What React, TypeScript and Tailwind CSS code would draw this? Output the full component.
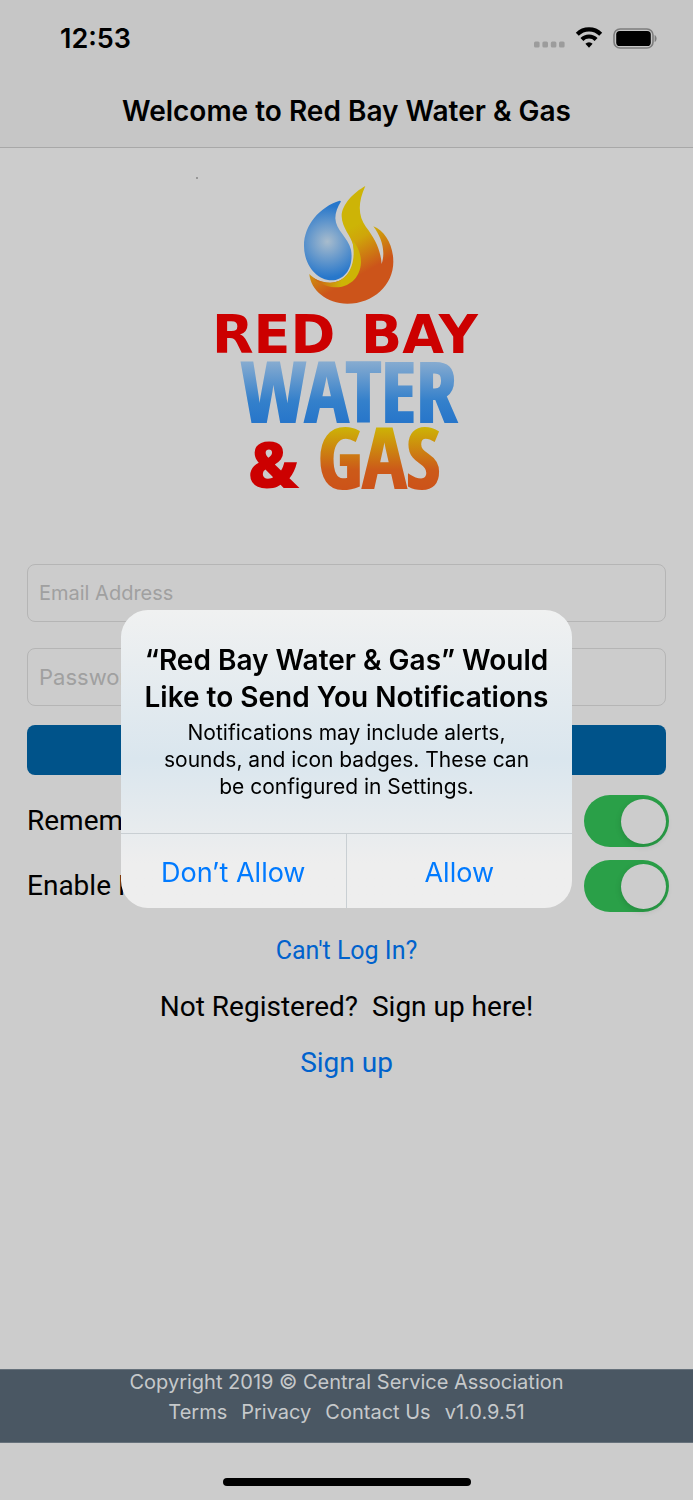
import { useState } from "react";

type ToggleRowProps = {
  id: string;
  label: string;
};

function StatusBar() {
  return (
    <div className="flex items-center justify-between pt-6 pr-9 pl-[60px]">
      <span className="text-[27px] leading-[30px] font-semibold">12:53</span>
      <div className="flex items-center gap-[11px]">
        {/* SIGNAL */}
        <svg width="31" height="20" viewBox="0 0 31 20" fill="#9c9c9c">
          <rect x="0" y="12.6" width="5.6" height="6" rx="1.5" />
          <rect x="8.4" y="12.6" width="5.6" height="6" rx="1.5" />
          <rect x="16.8" y="12.6" width="5.6" height="6" rx="1.5" />
          <rect x="25" y="12.6" width="5.6" height="6" rx="1.5" />
        </svg>
        {/* WIFI */}
        <svg width="26" height="20" viewBox="0 0 26 20" fill="none" stroke="#000" overflow="visible">
          <path d="M1.3 5.2 A16.5 16.5 0 0 1 24.7 5.2" strokeWidth="4.2" />
          <path d="M5.9 10.5 A9.8 9.8 0 0 1 20.1 10.5" strokeWidth="4" />
          <path d="M9.4 14.8 A4.8 4.8 0 0 1 16.6 14.8 L13 18.8 Z" fill="#000" stroke="none" />
        </svg>
        {/* BATTERY */}
        <svg width="44" height="22" viewBox="0 0 44 22">
          <rect x="1" y="1" width="39" height="19" rx="6" fill="none" stroke="#7d7d7d" strokeWidth="1.6" />
          <rect x="3.2" y="3" width="34.6" height="15" rx="3.6" fill="#000" />
          <path d="M41.6 7 C44.2 8 44.2 13 41.6 14 Z" fill="#7d7d7d" />
        </svg>
      </div>
    </div>
  );
}

function Logo() {
  return (
    <svg width="309" height="330" viewBox="192 170 309 330" role="img" aria-label="Red Bay Water & Gas">
      <defs>
        <radialGradient id="drop" gradientUnits="userSpaceOnUse" cx="112" cy="200" r="108">
          <stop offset="0" stopColor="#a8bccd" />
          <stop offset="1" stopColor="#2777cb" />
        </radialGradient>
        <linearGradient id="flame" gradientUnits="userSpaceOnUse" x1="160" y1="170" x2="228" y2="290">
          <stop offset="0" stopColor="#cdb406" />
          <stop offset="0.3" stopColor="#cfa50a" />
          <stop offset="1" stopColor="#cc541a" />
        </linearGradient>
        <linearGradient id="crescent" gradientUnits="userSpaceOnUse" x1="80" y1="0" x2="155" y2="0">
          <stop offset="0" stopColor="#cc6416" />
          <stop offset="1" stopColor="#cdb406" />
        </linearGradient>
        <linearGradient id="water" gradientUnits="userSpaceOnUse" x1="0" y1="362" x2="0" y2="422">
          <stop offset="0" stopColor="#86abd0" />
          <stop offset="0.65" stopColor="#3480cb" />
          <stop offset="1" stopColor="#2776ca" />
        </linearGradient>
        <linearGradient id="gas" gradientUnits="userSpaceOnUse" x1="0" y1="427" x2="0" y2="488">
          <stop offset="0" stopColor="#cdb406" />
          <stop offset="0.7" stopColor="#cc5a19" />
          <stop offset="1" stopColor="#cc5319" />
        </linearGradient>
      </defs>
      <circle cx="197" cy="178" r="0.8" fill="#555" />
      <g transform="translate(290 175) scale(0.3333)">
        <path
          d="M149 77 Q154 77 152 81 C143 96 136 112 136 130 C137 165 174 188 183 224 C192 276 165 316 125 316 C80 316 42 270 42 212 C42 150 90 95 149 77 Z"
          fill="url(#drop)"
        />
        <path
          d="M226 33 C192 52 155 88 155 124 C156 160 184 184 190 212 C203 275 168 324 120 323 C90 322 72 311 58 297 C62 345 110 386 172 386 C250 386 310 330 310 260 C310 208 284 168 250 154 C274 186 288 226 275 267 C272 226 256 192 228 156 C204 122 203 84 226 33 Z"
          fill="url(#flame)"
        />
        <path
          d="M187 196 C203 212 213 236 213 262 C211 315 170 339 135 337 C106 335 84 322 70 309 C88 320 104 323 120 323 C168 324 203 275 187 196 Z"
          fill="url(#crescent)"
        />
      </g>
      <g fill="#cc0000" className="font-['DejaVu_Sans',sans-serif] text-[54px] font-bold">
        <text x="212" y="353">
          RED
        </text>
        <text x="361" y="353">
          BAY
        </text>
      </g>
      <text x="248" y="488" fill="#cc0000" className="font-['Open_Sans',sans-serif] text-[64px] font-extrabold">
        &amp;
      </text>
      <g
        textAnchor="middle"
        strokeWidth="2"
        className="font-['Open_Sans_Condensed','Open_Sans',sans-serif] text-[82px] font-bold"
      >
        <text x="349" y="422" fill="url(#water)" stroke="url(#water)">
          WATER
        </text>
        <text x="379" y="488" fill="url(#gas)" stroke="url(#gas)">
          GAS
        </text>
      </g>
    </svg>
  );
}

function ToggleRow({ id, label }: ToggleRowProps) {
  const [on, setOn] = useState(true);

  return (
    <div className="flex items-center justify-between pr-6 pl-[27px]">
      <label htmlFor={id} className="font-[Roboto,sans-serif] text-[28px] leading-9">
        {label}
      </label>
      <input
        id={id}
        type="checkbox"
        role="switch"
        checked={on}
        onChange={() => setOn(!on)}
        className="flex h-[52px] w-[85px] appearance-none items-center justify-start rounded-full bg-gray-400 p-[3px] before:size-[45px] before:rounded-full before:bg-[#cccccc] before:shadow-[0_2px_6px_rgba(0,0,0,0.15)] checked:justify-end checked:bg-[#2aa048]"
      />
    </div>
  );
}

function NotificationAlert({ onClose }: { onClose: () => void }) {
  return (
    <div className="fixed inset-0 flex items-center justify-center pt-[18px]">
      <div
        role="alertdialog"
        aria-labelledby="alert-title"
        aria-describedby="alert-text"
        className="w-[451px] overflow-hidden rounded-[27px] bg-linear-to-b from-[#f0f1f1] via-[#dae6ee] via-50% to-[#eeeeee] to-85% text-center"
      >
        <div className="px-5 pt-8 pb-[33px]">
          <h2 id="alert-title" className="text-[28px] leading-[37px] font-semibold">
            “Red Bay Water &amp; Gas” Would
            <br />
            Like to Send You Notifications
          </h2>
          <p id="alert-text" className="mt-[3px] text-[21px] leading-[27px]">
            Notifications may include alerts,
            <br />
            sounds, and icon badges. These can
            <br />
            be configured in Settings.
          </p>
        </div>
        <div className="grid grid-cols-2 divide-x divide-[#c9cfd3] border-t border-[#c9cfd3] text-[27px] leading-9 text-[#007aff]">
          <button type="button" onClick={onClose} className="h-[74px] pt-[3px]">
            Don’t Allow
          </button>
          <button type="button" onClick={onClose} className="h-[74px] pt-[3px]">
            Allow
          </button>
        </div>
      </div>
    </div>
  );
}

export default function App() {
  const [alertOpen, setAlertOpen] = useState(true);

  return (
    <div className="flex min-h-screen flex-col bg-[#cccccc] font-[Inter,sans-serif] text-black">
      {/* HEADER */}
      <header className="border-b border-[#a8a8a8] bg-[#c6c6c6]">
        <StatusBar />
        <h1 className="pt-[39px] pb-[18px] text-center text-[28px] leading-9 font-semibold">
          Welcome to Red Bay Water &amp; Gas
        </h1>
      </header>

      {/* LOGIN */}
      <main className="flex-1">
        <div className="flex justify-center pt-[22px] pb-16">
          <Logo />
        </div>
        <form onSubmit={(e) => e.preventDefault()}>
          <div className="flex flex-col px-[27px]">
            <input
              type="email"
              aria-label="Email Address"
              placeholder="Email Address"
              className="h-[58px] w-full rounded-lg border border-[#b5b5b5] px-[11px] text-[20px] placeholder:text-[#a0a0a0]"
            />
            <input
              type="password"
              aria-label="Password"
              placeholder="Password"
              className="mt-[26px] h-[58px] w-full rounded-lg border border-[#b5b5b5] px-[11px] text-[22px] placeholder:text-[#a0a0a0]"
            />
            <button type="submit" aria-label="Log In" className="mt-[19px] h-[50px] rounded-lg bg-[#00538a]" />
          </div>
          <div className="mt-5 flex flex-col gap-[13px]">
            <ToggleRow id="remember" label="Remember Me" />
            <ToggleRow id="notifications" label="Enable Notifications" />
          </div>
        </form>
        <div className="mt-5 flex flex-col items-center gap-[19px] font-[Roboto,sans-serif] text-[28px] leading-[37px]">
          <a href="#help" className="text-[25px] text-[#0062cc]">
            Can't Log In?
          </a>
          <p className="whitespace-pre">Not Registered?  Sign up here!</p>
          <a href="#signup" className="text-[#0062cc]">
            Sign up
          </a>
        </div>
      </main>

      {/* FOOTER */}
      <footer className="border-y border-[#66717b] bg-[#4a5763] pb-4 text-center text-[20px] text-[#c6c9cb]">
        <p className="leading-6">Copyright 2019 © Central Service Association</p>
        <nav className="mt-1 flex justify-center gap-[14px] leading-7">
          <a href="#terms">Terms</a>
          <a href="#privacy">Privacy</a>
          <a href="#contact">Contact Us</a>
          <span>v1.0.9.51</span>
        </nav>
      </footer>
      <div className="flex justify-center pt-[35px] pb-[14px]">
        <div className="h-2 w-[248px] rounded-full bg-black" />
      </div>

      {alertOpen && <NotificationAlert onClose={() => setAlertOpen(false)} />}
    </div>
  );
}
